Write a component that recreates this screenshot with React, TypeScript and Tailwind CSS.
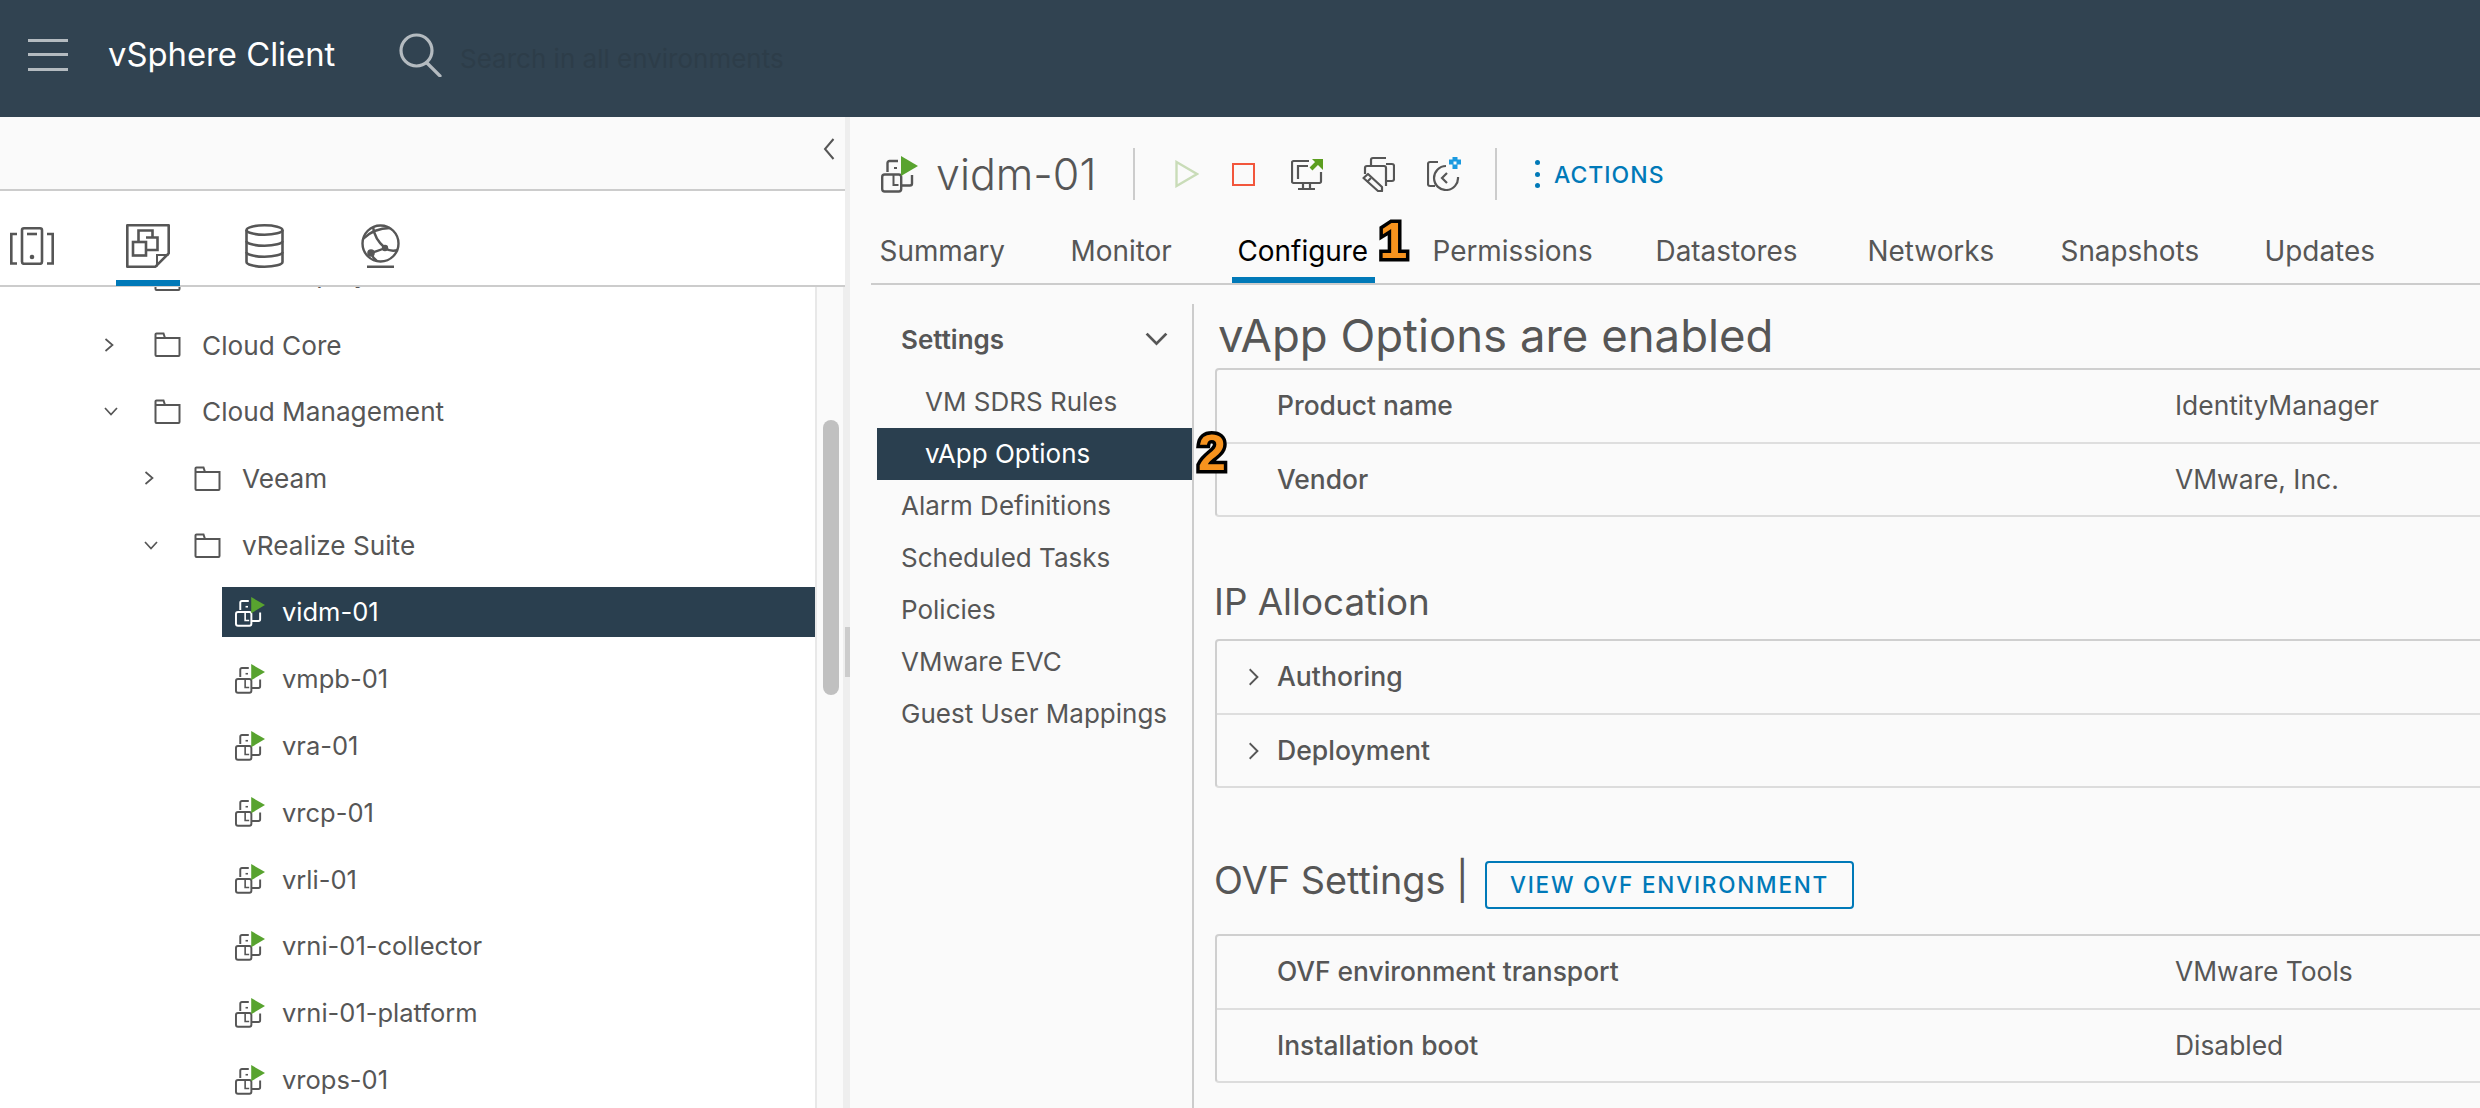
import React from "react";

const Folder = () => (
  <svg width="27" height="25" viewBox="0 0 27 25" fill="none" stroke="#565656" strokeWidth="2" className="shrink-0">
    <path d="M1.500 23V2.500a1 1 0 0 1 1-1h7l1.500 4.500h14.500V23a1 1 0 0 1-1 1H2.500a1 1 0 0 1-1-1Z" />
    <path d="M1.500 6H11" />
  </svg>
);

const VmIcon = ({ w = 30, color = "#565656" }: { w?: number; color?: string }) => (
  <svg width={w} height={w} viewBox="0 0 37 37" fill="none" stroke={color} strokeWidth="2.400" className="shrink-0">
    <path d="M6.500 16V7a2 2 0 0 1 2-2H17" />
    <path d="M31 19v8.500a2 2 0 0 1-2 2h-8" />
    <rect x="1.200" y="18.500" width="19" height="17" rx="2.500" />
    <path d="M12.500 19v10h5" strokeWidth="2" />
    <path d="M13 12h3" strokeWidth="2" />
    <path d="M20 0 37 10 20 20Z" fill="#58a32f" stroke="none" />
  </svg>
);

const ChevronRight = ({ w = 10, h = 14 }: { w?: number; h?: number }) => (
  <svg width={w} height={h} viewBox="0 0 10 14" preserveAspectRatio="none" fill="none" stroke="#565656" strokeWidth="1.700" className="shrink-0">
    <path d="M1.500 1l7 6-7 6" />
  </svg>
);

const ChevronDown = ({ w = 14, h = 9 }: { w?: number; h?: number }) => (
  <svg width={w} height={h} viewBox="0 0 14 9" preserveAspectRatio="none" fill="none" stroke="#565656" strokeWidth="1.700" className="shrink-0">
    <path d="M1 1l6 6.500L13 1" />
  </svg>
);

const FolderRow = ({ depth, label, open, clipped }: { depth: number; label: string; open?: boolean; clipped?: boolean }) => (
  <div className={`flex h-[66.8px] items-center ${depth === 0 ? "pl-[104px]" : "pl-[144px]"}`}>
    <div className="flex w-[50px] items-center">{open ? <ChevronDown /> : <ChevronRight />}</div>
    <Folder />
    <span className={`ml-[21px] text-[26.200px] whitespace-nowrap ${clipped ? "pb-[9px]" : "pt-[1px]"}`}>{label}</span>
  </div>
);

const VmRow = ({ label, selected }: { label: string; selected?: boolean }) => (
  <div className="flex h-[66.8px] items-center pl-[222px]">
    <div className={`flex h-[50px] flex-1 items-center pl-[13px] ${selected ? "bg-[#2a3f4f] text-white" : ""}`}>
      <VmIcon color={selected ? "#ffffff" : "#565656"} />
      <span className="ml-[17px] pt-[1px] text-[25.500px] whitespace-nowrap">{label}</span>
    </div>
  </div>
);

const Badge = ({ n, className }: { n: string; className: string }) => (
  <span
    className={`absolute font-['Liberation_Sans',sans-serif] text-[50px] leading-none font-bold text-[#f7931e] [-webkit-text-stroke:7px_#000000] [paint-order:stroke_fill] [text-shadow:1px_2px_2px_rgba(0,0,0,0.45)] ${className}`}
  >
    {n}
  </span>
);

const tabs: [string, string][] = [
  ["Summary", "w-[191px]"],
  ["Monitor", "w-[167px]"],
  ["Configure", "w-[195px]"],
  ["Permissions", "w-[223px]"],
  ["Datastores", "w-[212px]"],
  ["Networks", "w-[193px]"],
  ["Snapshots", "w-[204px]"],
  ["Updates", "w-[130px]"],
];

const Card = ({ children }: { children: React.ReactNode }) => (
  <div className="w-[1320px] rounded-[4px] border-2 border-[#cfcfcf] border-b-[#dcdcdc]">{children}</div>
);

const KvRow = ({ k, v, first }: { k: string; v: string; first?: boolean }) => (
  <div className={`flex items-center pl-[60px] text-[26.400px] ${first ? "h-[74px] border-b-2 border-[#dedede]" : "h-[71px]"}`}>
    <span className="w-[898px] font-medium">{k}</span>
    <span className="whitespace-nowrap">{v}</span>
  </div>
);

const ExpRow = ({ k, first }: { k: string; first?: boolean }) => (
  <div className={`flex items-center pl-[31px] text-[26.600px] ${first ? "h-[74px] border-b-2 border-[#dedede]" : "h-[71px]"}`}>
    <span className="flex w-[29px]">
      <ChevronRight w={11} h={18} />
    </span>
    <span className="font-medium">{k}</span>
  </div>
);

export default function App() {
  return (
    <div className="flex h-[1108px] w-[2480px] flex-col overflow-hidden bg-[#fafafa] font-['Inter',sans-serif] text-[26px] text-[#565656]">
      {/* Header */}
      <header className="flex h-[117px] shrink-0 items-center bg-[#314351] pb-[8px]">
        <div className="ml-[28px] flex h-[32px] w-[40px] flex-col justify-between">
          <div className="h-[3px] bg-[#b4bbc0]" />
          <div className="h-[3px] bg-[#b4bbc0]" />
          <div className="h-[3px] bg-[#b4bbc0]" />
        </div>
        <span className="ml-[40px] w-[291px] text-[32.800px] leading-none text-white">vSphere Client</span>
        <svg width="44" height="44" viewBox="0 0 44 44" fill="none" stroke="#b4bbc0" strokeWidth="3.200">
          <circle cx="17.500" cy="17.500" r="15.500" />
          <path d="M28 30l13 13" strokeLinecap="round" />
        </svg>
        <span className="ml-[17px] mt-[7px] text-[26px] text-[#2d3d49]">Search in all environments</span>
      </header>

      <div className="flex min-h-0 flex-1">
        {/* Sidebar */}
        <aside className="flex w-[845px] shrink-0 flex-col bg-white">
          <div className="flex h-[74px] shrink-0 items-center justify-end border-b-2 border-[#cccccc] bg-[#fafafa] pr-[10px] pb-[8px]">
            <svg width="12" height="22" viewBox="0 0 12 22" fill="none" stroke="#565656" strokeWidth="2">
              <path d="M10.500 1 2 11l8.500 10" />
            </svg>
          </div>
          <div className="relative flex h-[96px] shrink-0 items-start border-b-2 border-[#cccccc]">
            <svg width="44" height="38" viewBox="0 0 44 38" fill="none" stroke="#565656" strokeWidth="2.600" className="mt-[36px] ml-[10px]">
              <rect x="12" y="1.300" width="20" height="35.500" rx="2" />
              <path d="M17 7h10" />
              <circle cx="22" cy="30" r="2.300" fill="#565656" stroke="none" />
              <path d="M7 7H1.300v29.500H7" />
              <path d="M37 7h5.700v29.500H37" />
            </svg>
            <div className="relative mt-[33px] ml-[72px] h-[44px] w-[44px]">
              <svg width="44" height="44" viewBox="0 0 44 44" fill="none" stroke="#565656" strokeWidth="2.600">
                <path d="M1.300 1.300h41.400v28L29.500 42.700H1.300Z" strokeLinejoin="round" />
                <path d="M42.500 31H31v11.500" strokeWidth="2" />
                <rect x="7" y="18" width="13" height="13.500" />
                <path d="M12.500 18V6.500h14V13" />
                <path d="M20 13.500h11.500v12.500H20" />
              </svg>
              <div className="absolute top-[56px] -left-[10px] h-[6px] w-[64px] bg-[#0079b8]" />
            </div>
            <svg width="39" height="44" viewBox="0 0 39 44" fill="none" stroke="#565656" strokeWidth="2.600" className="mt-[33px] ml-[75px]">
              <ellipse cx="19.500" cy="6" rx="18" ry="4.700" />
              <path d="M1.500 6v32c0 2.600 8 4.700 18 4.700s18-2.100 18-4.700V6" />
              <path d="M1.500 17c0 2.600 8 4.700 18 4.700s18-2.100 18-4.700" />
              <path d="M1.500 28c0 2.600 8 4.700 18 4.700s18-2.100 18-4.700" />
            </svg>
            <svg width="39" height="44" viewBox="0 0 39 44" fill="none" stroke="#565656" strokeWidth="2.400" className="mt-[33px] ml-[77px]">
              <circle cx="19.500" cy="19.500" r="18" />
              <path d="M12 3c1 8 5 15 12 21 4 3 8 3.500 13 2" />
              <path d="M2 15C8 9 18 4 29 4" />
              <path d="M10 29c5-2 10-3 14-5" />
              <path d="M10 29c1 3 3 6 6 8" />
              <circle cx="10" cy="29" r="2.600" fill="#565656" />
              <circle cx="24" cy="24" r="2" fill="#565656" />
              <path d="M6 43h27" strokeWidth="3" />
            </svg>
          </div>
          <div className="flex min-h-0 flex-1">
            <div className="min-w-0 flex-1 overflow-hidden">
              <div className="-mt-[42.400px]">
                <FolderRow depth={0} label="Cloud Deployment Services" clipped />
                <FolderRow depth={0} label="Cloud Core" />
                <FolderRow depth={0} label="Cloud Management" open />
                <FolderRow depth={1} label="Veeam" />
                <FolderRow depth={1} label="vRealize Suite" open />
                <VmRow label="vidm-01" selected />
                <VmRow label="vmpb-01" />
                <VmRow label="vra-01" />
                <VmRow label="vrcp-01" />
                <VmRow label="vrli-01" />
                <VmRow label="vrni-01-collector" />
                <VmRow label="vrni-01-platform" />
                <VmRow label="vrops-01" />
              </div>
            </div>
            <div className="w-[30px] shrink-0 border-r-2 border-l-2 border-r-[#eeeeee] border-l-[#e8e8e8] bg-[#fafafa] pt-[133px] pl-[6px]">
              <div className="h-[275px] w-[16px] rounded-full bg-[#c0c0c0]" />
            </div>
          </div>
        </aside>

        {/* Splitter */}
        <div className="w-[5px] shrink-0 bg-[#eeeeee] pt-[510px]">
          <div className="h-[50px] bg-[#cccccc]" />
        </div>

        {/* Main */}
        <main className="flex min-w-0 flex-1 flex-col">
          <div className="mt-[31px] flex h-[52px] shrink-0 items-center pl-[31px]">
            <VmIcon w={37} />
            <span className="ml-[18px] w-[197px] text-[43px] leading-none font-light">vidm-01</span>
            <div className="h-[52px] w-[2px] bg-[#cccccc]" />
            <svg width="24" height="28" viewBox="0 0 24 28" fill="none" stroke="#c9dcb8" strokeWidth="2.400" className="ml-[40px]">
              <path d="M1.500 2 22 14 1.500 26Z" />
            </svg>
            <div className="ml-[33px] h-[23px] w-[23px] border-[2.500px] border-[#f2563c]" />
            <svg width="32" height="32" viewBox="0 0 32 32" fill="none" stroke="#565656" strokeWidth="2.200" className="ml-[36px]">
              <path d="M18 3H2.500a1.500 1.500 0 0 0-1.500 1.500v19A1.500 1.500 0 0 0 2.500 25h26a1.500 1.500 0 0 0 1.500-1.500V14" />
              <path d="M7 21V8h10" />
              <path d="M12 25v5M19 25v5M7 31h17" />
              <path d="M20 11l7-7" stroke="#5c9e1f" strokeWidth="4" />
              <path d="M21 1h11v11Z" fill="#5c9e1f" stroke="none" />
            </svg>
            <svg width="33" height="36" viewBox="0 0 33 36" fill="none" stroke="#565656" strokeWidth="2.200" className="ml-[39px]">
              <path d="M9 10V4a2 2 0 0 1 2-2h13" />
              <path d="M24 8h6a2 2 0 0 1 2 2v13a2 2 0 0 1-2 2h-7" />
              <path d="M3 18v-6a2 2 0 0 1 2-2h17a2 2 0 0 1 2 2v18" />
              <path d="M1.500 22 6 18l14 13v4h-4Z" strokeLinejoin="round" />
              <path d="M5 26l4-4" />
            </svg>
            <svg width="34" height="34" viewBox="0 0 34 34" fill="none" stroke="#565656" strokeWidth="2.200" className="ml-[32px]">
              <path d="M11 5H3a2 2 0 0 0-2 2v20a2 2 0 0 0 2 2h5" />
              <path d="M19 9a12 12 0 1 0 12 11" />
              <path d="M20 16l-5 5 5 5" />
              <path d="M22 5h12M28 0v12" stroke="#1b9ae0" strokeWidth="5" strokeDasharray="4.500 3" />
            </svg>
            <div className="ml-[34px] h-[52px] w-[2px] bg-[#cccccc]" />
            <div className="ml-[38px] flex h-[28px] w-[5px] flex-col justify-between">
              <div className="h-[5px] rounded-full bg-[#0079b8]" />
              <div className="h-[5px] rounded-full bg-[#0079b8]" />
              <div className="h-[5px] rounded-full bg-[#0079b8]" />
            </div>
            <span className="mt-[2px] ml-[14px] text-[23px] font-medium tracking-[1px] text-[#0079b8]">ACTIONS</span>
          </div>

          <div className="ml-[21px] flex h-[85px] shrink-0 border-b-2 border-[#cccccc] pl-[8.500px]">
            {tabs.map(([t, w]) => (
              <div key={t} className={`relative h-[83px] shrink-0 pt-[32px] ${w}`}>
                <span className={`text-[27.900px] leading-[30px] ${t === "Configure" ? "text-black" : ""}`}>{t}</span>
                {t === "Configure" && (
                  <>
                    <div className="absolute bottom-0 -left-[5.500px] h-[6px] w-[143px] bg-[#0079b8]" />
                    <Badge n="1" className="top-[16px] left-[142px]" />
                  </>
                )}
              </div>
            ))}
          </div>

          <div className="flex min-h-0 flex-1">
            <nav className="mt-[19px] ml-[27px] w-[317px] shrink-0 border-r-2 border-[#cccccc]">
              <div className="flex h-[72px] items-center justify-between pr-[24px] pb-[2px] pl-[24px]">
                <span className="font-semibold">Settings</span>
                <ChevronDown w={23} h={14} />
              </div>
              <div className="flex h-[52px] items-center pb-[1px] pl-[48px]">VM SDRS Rules</div>
              <div className="relative flex h-[52px] items-center bg-[#2a3f4f] pb-[1px] pl-[48px] text-white">
                vApp Options
                <Badge n="2" className="top-[0px] left-[321px]" />
              </div>
              {["Alarm Definitions", "Scheduled Tasks", "Policies", "VMware EVC", "Guest User Mappings"].map((t) => (
                <div key={t} className="flex h-[52px] items-center pb-[2px] pl-[24px]">
                  {t}
                </div>
              ))}
            </nav>
            <section className="min-w-0 flex-1 pl-[21px]">
              <h1 className="mt-[19px] flex h-[64px] items-center pl-[3px] text-[45.500px] leading-none">vApp Options are enabled</h1>
              <Card>
                <KvRow k="Product name" v="IdentityManager" first />
                <KvRow k="Vendor" v="VMware, Inc." />
              </Card>
              <h2 className="mt-[48px] -ml-[1px] flex h-[74px] items-center text-[36.800px] leading-none">IP Allocation</h2>
              <Card>
                <ExpRow k="Authoring" first />
                <ExpRow k="Deployment" />
              </Card>
              <div className="mt-[73px] mb-[25px] flex h-[48px] items-center">
                <span className="-ml-[1px] w-[271px] pb-[8px] text-[37.800px] leading-none">OVF Settings |</span>
                <button className="flex h-[48px] w-[369px] items-center justify-center rounded-[4px] border-2 border-[#0079b8] text-[22.500px] font-medium tracking-[1.800px] text-[#0079b8]">
                  VIEW OVF ENVIRONMENT
                </button>
              </div>
              <Card>
                <KvRow k="OVF environment transport" v="VMware Tools" first />
                <KvRow k="Installation boot" v="Disabled" />
              </Card>
            </section>
          </div>
        </main>
      </div>
    </div>
  );
}
